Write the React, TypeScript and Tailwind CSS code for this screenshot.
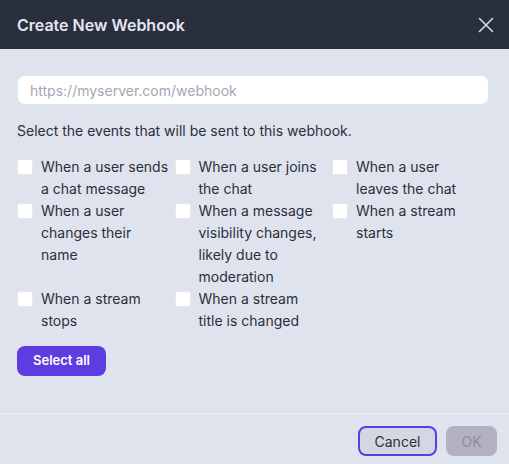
import { X } from "lucide-react";

const events = [
  ["When a user sends", "a chat message"],
  ["When a user joins", "the chat"],
  ["When a user", "leaves the chat"],
  ["When a user", "changes their", "name"],
  ["When a message", "visibility changes,", "likely due to", "moderation"],
  ["When a stream", "starts"],
  ["When a stream", "stops"],
  ["When a stream", "title is changed"],
];

export default function App() {
  return (
    <div
      className="w-[509px] h-[464px] flex flex-col bg-[#dfe3ee] text-[#2b2f3a]"
      style={{ fontFamily: "Inter, 'Noto Sans', sans-serif" }}
    >
      <header className="h-[49px] shrink-0 bg-[#2a2f3e] flex items-center justify-between pl-[17px] pr-[10px]">
        <h1 className="text-[16px] font-semibold text-[#e4e7f0]">Create New Webhook</h1>
        <X size={26} strokeWidth={1.4} className="text-[#d6dae4]" />
      </header>

      <main className="flex-1 pl-[17px] pr-[20px] pt-[26px]">
        <input
          type="text"
          placeholder="https://myserver.com/webhook"
          className="w-full h-[30px] rounded-[8px] bg-white px-[12px] text-[14px] outline-none placeholder:text-[#a3a7b3] border border-[#e3e6ee]"
        />

        <p className="mt-[16px] text-[14px] leading-[20px]">
          Select the events that will be sent to this webhook.
        </p>

        <div className="mt-[15px] grid grid-cols-[150px_150px_150px] gap-x-[7.5px]">
          {events.map((lines) => (
            <label key={lines.join(" ")} className="flex gap-[8px] text-[14px] leading-[22px]">
              <span className="mt-[3px] w-[16px] h-[16px] shrink-0 bg-white border border-[#e6e8ef] rounded-[2px]" />
              <span className="flex flex-col whitespace-nowrap">
                {lines.map((line) => (
                  <span key={line}>{line}</span>
                ))}
              </span>
            </label>
          ))}
        </div>

        <button className="mt-[14px] h-[30px] w-[89px] rounded-[8px] bg-[#5d3ce2] text-white text-[13px] font-semibold">
          Select all
        </button>
      </main>

      <footer className="h-[51px] shrink-0 border-t border-[#eceef4] flex justify-end items-start gap-[9px] pt-[12px] pr-[12px]">
        <button className="h-[30px] w-[79px] rounded-[8px] border-2 border-[#5d3ce2] bg-[#d3d7e2] text-[14px] text-[#2b2f3a]">
          Cancel
        </button>
        <button className="h-[30px] w-[51px] rounded-[8px] bg-[#b3b0c1] text-[14px] text-[#8f8d9c]">
          OK
        </button>
      </footer>
    </div>
  );
}
